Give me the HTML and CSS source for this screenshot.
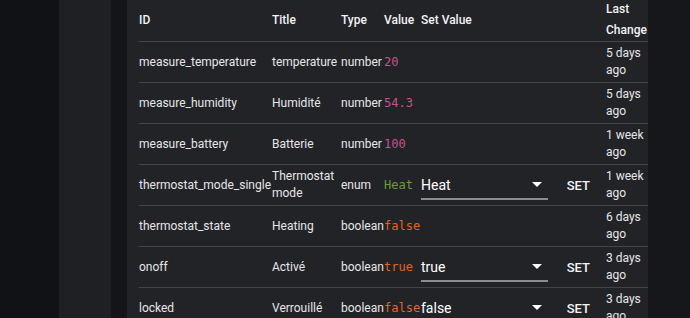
FILE: index.html
```html
<!DOCTYPE html>
<html lang="en">
<head>
  <meta charset="UTF-8">
  <meta name="viewport" content="width=device-width, initial-scale=1.0">
  <title>Capabilities</title>
  <link rel="stylesheet" href="styles.css">
</head>
<body>
  <div class="app">
    <div class="rail"></div>
    <div class="nav"></div>
    <div class="gutter"></div>
    <div class="card">
      <table class="caps">
        <colgroup>
          <col class="col-id">
          <col class="col-title">
          <col class="col-type">
          <col class="col-value">
          <col class="col-set">
          <col class="col-change">
        </colgroup>
        <thead>
          <tr>
            <th>ID</th>
            <th>Title</th>
            <th>Type</th>
            <th>Value</th>
            <th>Set Value</th>
            <th>Last Change</th>
          </tr>
        </thead>
        <tbody>
          <tr>
            <td>measure_temperature</td>
            <td>temperature</td>
            <td>number</td>
            <td><span class="val number">20</span></td>
            <td></td>
            <td>5 days ago</td>
          </tr>
          <tr>
            <td>measure_humidity</td>
            <td>Humidité</td>
            <td>number</td>
            <td><span class="val number">54.3</span></td>
            <td></td>
            <td>5 days ago</td>
          </tr>
          <tr>
            <td>measure_battery</td>
            <td>Batterie</td>
            <td>number</td>
            <td><span class="val number">100</span></td>
            <td></td>
            <td>1 week ago</td>
          </tr>
          <tr>
            <td>thermostat_mode_single</td>
            <td>Thermostat mode</td>
            <td>enum</td>
            <td><span class="val enum">Heat</span></td>
            <td>
              <div class="setter">
                <div class="select"><span>Heat</span><i class="arrow"></i></div>
                <button class="set-button">SET</button>
              </div>
            </td>
            <td>1 week ago</td>
          </tr>
          <tr>
            <td>thermostat_state</td>
            <td>Heating</td>
            <td>boolean</td>
            <td><span class="val bool">false</span></td>
            <td></td>
            <td>6 days ago</td>
          </tr>
          <tr>
            <td>onoff</td>
            <td>Activé</td>
            <td>boolean</td>
            <td><span class="val bool">true</span></td>
            <td>
              <div class="setter">
                <div class="select"><span>true</span><i class="arrow"></i></div>
                <button class="set-button">SET</button>
              </div>
            </td>
            <td>3 days ago</td>
          </tr>
          <tr>
            <td>locked</td>
            <td>Verrouillé</td>
            <td>boolean</td>
            <td><span class="val bool">false</span></td>
            <td>
              <div class="setter">
                <div class="select"><span>false</span><i class="arrow"></i></div>
                <button class="set-button">SET</button>
              </div>
            </td>
            <td>3 days ago</td>
          </tr>
        </tbody>
      </table>
    </div>
  </div>
</body>
</html>
```

FILE: styles.css
```css
body {
  font-family: 'Roboto', 'Liberation Sans', sans-serif;
  margin: 0;
  padding: 0;
  background-color: #16171b;
  color: #e6e6e8;
}

.app {
  display: flex;
  height: 318px;
  overflow: hidden;
}

.rail {
  flex: 0 0 59px;
  background-color: #111216;
}

.nav {
  flex: 0 0 52px;
  background-color: #1f2024;
}

.gutter {
  flex: 0 0 16px;
  background-color: #141519;
}

.card {
  flex: 0 0 453px;
  padding-left: 12px;
  background-color: #222327;
}

.caps {
  width: 509px;
  table-layout: fixed;
  border-collapse: collapse;
  margin-top: -1px;
  font-size: 12px;
}

.col-id { width: 133px; }
.col-title { width: 69px; }
.col-type { width: 43px; }
.col-value { width: 37px; }
.col-set { width: 185px; }
.col-change { width: 42px; }

.caps tr {
  border-bottom: 1px solid #434448;
}

.caps th {
  text-align: left;
  font-weight: 500;
  color: #f2f2f4;
  line-height: 21px;
  padding: 0;
  vertical-align: middle;
}

.caps td {
  line-height: 17px;
  padding: 3px 0;
  vertical-align: middle;
}

.val {
  font-family: 'DejaVu Sans Mono', 'Liberation Mono', monospace;
  font-size: 12px;
}

.val.number {
  color: #cc4f8b;
}

.val.enum {
  color: #6d9c38;
}

.val.bool {
  color: #e5641d;
}

.setter {
  display: flex;
  align-items: center;
}

.select {
  width: 128px;
  display: flex;
  align-items: center;
  justify-content: space-between;
  padding-top: 6px;
  padding-bottom: 5px;
  border-bottom: 2px solid #8b8c90;
  color: #ffffff;
  font-size: 14px;
  line-height: 16px;
}

.arrow {
  width: 0;
  height: 0;
  border-left: 5px solid transparent;
  border-right: 5px solid transparent;
  border-top: 5px solid #ffffff;
  margin-right: 6px;
}

.set-button {
  margin-left: 3px;
  padding: 0 16px;
  height: 28px;
  background: none;
  border: none;
  color: #f4f4f6;
  font-family: 'Roboto', 'Liberation Sans', sans-serif;
  font-size: 13px;
  font-weight: 500;
  cursor: pointer;
}
```
